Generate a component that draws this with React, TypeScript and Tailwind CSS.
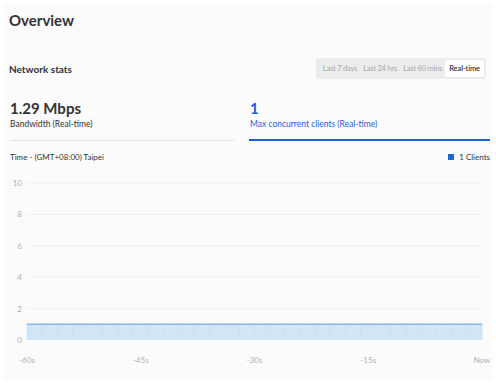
import React from 'react';

const ranges = ['Last 7 days', 'Last 24 hrs', 'Last 60 mins', 'Real-time'];

// chart geometry, in svg coords (svg sits at page x=3)
const X0 = 24;
const X1 = 479;
const yFor = (v: number) => 13 + (10 - v) * 15.7;

function Chart() {
	const ticks = [10, 8, 6, 4, 2, 0];
	const xLabels = ['-60s', '-45s', '-30s', '-15s', 'Now'];
	const ticksX = Array.from({ length: 31 }, (_, i) => X0 + (i * (X1 - X0)) / 30);
	return (
		<svg width={490} height={200} className="block">
			{ticks.map((t) => (
				<g key={t}>
					<text x={19} y={yFor(t) + 3} textAnchor="end" fontSize={8} fill="#b0b0b0" fontFamily="Lato, sans-serif">
						{t}
					</text>
					{t !== 0 && <line x1={X0} x2={X1} y1={yFor(t)} y2={yFor(t)} stroke="#efefef" strokeWidth={1} />}
				</g>
			))}
			<rect x={X0} y={yFor(1)} width={X1 - X0} height={yFor(0) - yFor(1)} fill="#d0e5f6" />
			{ticksX.map((x, i) => (
				<line key={i} x1={x} x2={x} y1={yFor(1)} y2={yFor(0)} stroke="#c6def2" strokeWidth={0.6} />
			))}
			<line x1={X0} x2={X1} y1={yFor(1)} y2={yFor(1)} stroke="#86b8e8" strokeWidth={1.5} />
			{xLabels.map((l, i) => (
				<text
					key={l}
					x={X0 + (i * (X1 - X0)) / 4}
					y={193}
					textAnchor="middle"
					fontSize={8}
					fill="#b0b0b0"
					fontFamily="Lato, sans-serif"
				>
					{l}
				</text>
			))}
		</svg>
	);
}

export default function App() {
	return (
		<div className="h-[383px] w-[496px] bg-white p-[3px] font-['Lato','Noto_Sans',sans-serif] text-[#333]">
			<div className="h-full bg-[#fbfbfb]">
				{/* Title */}
				<h1 className="px-[6px] pt-[8px] text-[15px] font-bold leading-[18px] text-[#333]">Overview</h1>

				{/* Network stats row */}
				<div className="mt-[29px] flex items-center justify-between pl-[6px] pr-[7px]">
					<div className="text-[10px] font-bold leading-[12px]">Network stats</div>
					<div className="flex h-[21px] items-center rounded-[2px] bg-[#ececec] p-[2px] pl-[4px]">
						{ranges.map((r) => (
							<div
								key={r}
								className={
									r === 'Real-time'
										? 'flex h-full items-center rounded-[2px] bg-white px-[4px] text-[7.5px] font-semibold tracking-[-0.1px] text-[#333]'
										: 'flex h-full items-center px-[3px] text-[7.5px] tracking-[-0.2px] text-[#a8a8a8]'
								}
							>
								{r}
							</div>
						))}
					</div>
				</div>

				{/* Stats tabs */}
				<div className="mt-[20px] flex gap-[14px] pl-[7px] pr-[3px]">
					<div className="w-[225px] border-b border-[#e3e3e3] pb-[10px]">
						<div className="text-[15px] font-bold leading-[18px]">1.29 Mbps</div>
						<div className="mt-[2px] text-[8.5px] leading-[11px]">Bandwidth (Real-time)</div>
					</div>
					<div className="flex-1 border-b-2 border-[#1e5fd6] pb-[9px] pl-[1px] text-[#1e5fd6]">
						<div className="text-[15px] font-bold leading-[18px]">1</div>
						<div className="mt-[2px] text-[8.5px] leading-[11px]">Max concurrent clients (Real-time)</div>
					</div>
				</div>

				{/* Chart header */}
				<div className="mt-[11px] flex items-center justify-between pl-[7px] pr-[3px] text-[8px] leading-[10px]">
					<span>Time - (GMT+08:00) Taipei</span>
					<span className="flex items-center gap-[5px]">
						<span className="h-[6px] w-[6px] bg-[#1e66d8]" />
						<span>1 Clients</span>
					</span>
				</div>

				<div className="mt-[8px]">
					<Chart />
				</div>
			</div>
		</div>
	);
}
